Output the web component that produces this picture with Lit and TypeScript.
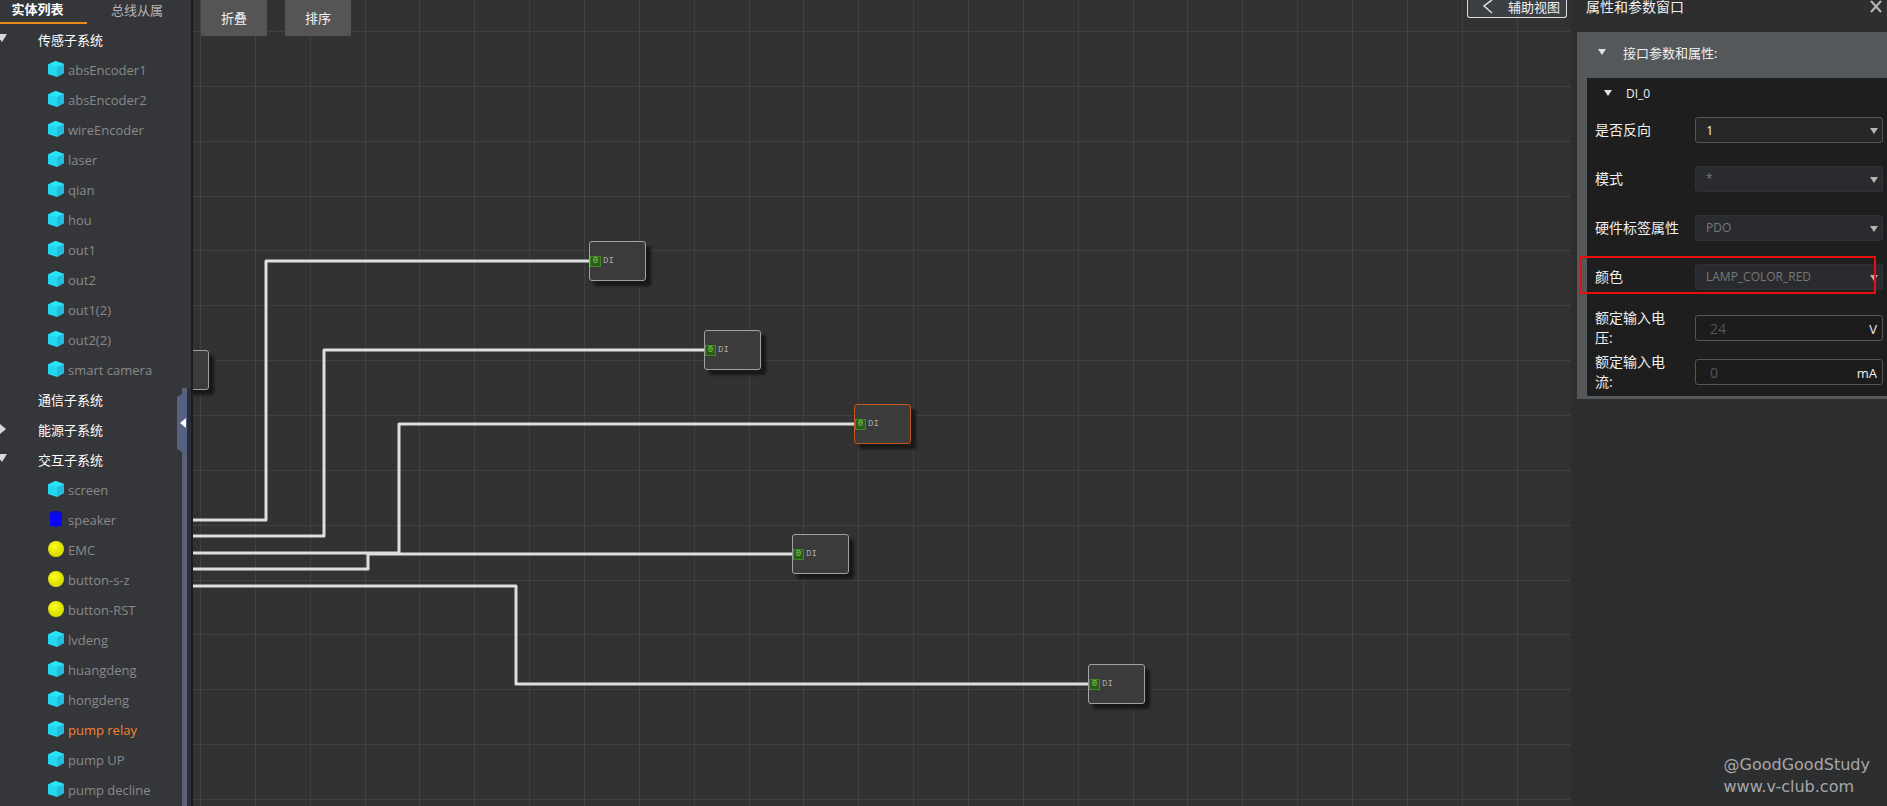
import { LitElement, html, css, svg } from "lit";
import { customElement } from "lit/decorators.js";
import { classMap } from "lit/directives/class-map.js";

type Icon = "cube" | "cylinder" | "ball";
interface Leaf { name: string; icon: Icon; active?: boolean }
interface Group { name: string; state: "open" | "closed" | "empty"; items: Leaf[] }

const cubes = (...names: string[]): Leaf[] => names.map((name) => ({ name, icon: "cube" as Icon }));

const GROUPS: Group[] = [
  {
    name: "传感子系统", state: "open",
    items: cubes("absEncoder1", "absEncoder2", "wireEncoder", "laser", "qian", "hou", "out1", "out2", "out1(2)", "out2(2)", "smart camera"),
  },
  { name: "通信子系统", state: "empty", items: [] },
  { name: "能源子系统", state: "closed", items: [] },
  {
    name: "交互子系统", state: "open",
    items: [
      ...cubes("screen"),
      { name: "speaker", icon: "cylinder" },
      { name: "EMC", icon: "ball" },
      { name: "button-s-z", icon: "ball" },
      { name: "button-RST", icon: "ball" },
      ...cubes("lvdeng", "huangdeng", "hongdeng"),
      { name: "pump relay", icon: "cube", active: true },
      ...cubes("pump UP", "pump decline"),
    ],
  },
];

const FONT = css`
  :host { font-family: "Open Sans", "Noto Sans CJK SC", sans-serif; }
  *, *::after { box-sizing: border-box; }
  button { font: inherit; color: inherit; background: none; border: 0; padding: 0; cursor: pointer; }
`;

@customElement("entity-tree")
class EntityTree extends LitElement {
  static styles = [FONT, css`
    :host { display: block; position: relative; background: #35363a; overflow: hidden; border-right: 2px solid #1c1c1d; font-size: 13px; color: #fff; }
    .tabs { display: grid; grid-template-columns: 87px 1fr; height: 24px; }
    .tab { height: 24px; line-height: 18px; padding-bottom: 4px; padding-right: 4px; color: #b4b4b5; }
    .tab.on { color: #fff; font-weight: 700; padding-right: 12px; border-bottom: 2px solid #f08a16; }
    ul { list-style: none; margin: 0; padding: 0; }
    .group, .leaf { display: flex; align-items: center; width: 100%; height: 30px; text-align: left; white-space: nowrap; }
    .group { padding-bottom: 2px; }
    .mark { width: 38px; height: 10px; flex: none; }
    .mark svg { display: block; }
    .leaf { padding-left: 48px; gap: 4px; color: #88898b; }
    .leaf svg { flex: none; margin-bottom: 3px; }
    .leaf.active { color: #f58231; }
    .tree { padding-top: 1px; }
    .rail { position: absolute; left: 182px; top: 388px; bottom: 0; width: 5px; background: #5d6177; }
    .edge { position: absolute; left: 187px; top: 388px; bottom: 0; width: 4px; background: #2b2e38; }
    .fold { position: absolute; left: 177px; top: 391px; width: 10px; height: 64px; background: #566080; clip-path: polygon(0 6px, 100% 0, 100% 100%, 0 58px); }
    .fold svg { display: block; margin: 0 0 0 3px; }
  `];

  private icon(kind: Icon) {
    if (kind === "ball") return html`<svg width="16" height="18" viewBox="0 0 16 18"><defs><radialGradient id="y" cx="40%" cy="35%"><stop offset="0" stop-color="#ffff1a"/><stop offset="1" stop-color="#dde000"/></radialGradient></defs><circle cx="8" cy="9" r="8" fill="url(#y)"/></svg>`;
    if (kind === "cylinder") return html`<svg width="16" height="18" viewBox="0 0 16 18"><path d="M2 2.500Q8 .5 14 2.500V15.500Q8 18 2 15.500Z" fill="#0a06f5"/><ellipse cx="8" cy="2.500" rx="6" ry="1.300" fill="#0b09c9"/></svg>`;
    return html`<svg width="16" height="18" viewBox="0 0 16 18"><path d="M7.500 1L16 4V13L9 17L0 14V4.500Z" fill="#23d8ee"/><path d="M7.500 1L16 4L9 7L0 4.500Z" fill="#2be4f8"/><path d="M9 7L16 4V13L9 17Z" fill="#25bddb"/></svg>`;
  }

  render() {
    return html`
      <div class="tabs" role="tablist">
        <button class="tab on" role="tab" aria-selected="true">实体列表</button>
        <button class="tab" role="tab" aria-selected="false">总线从属</button>
      </div>
      <ul class="tree">
        ${GROUPS.map((g) => html`<li>
          <button class="group">
            <span class="mark">${g.state === "open"
              ? html`<svg width="8" height="8"><path d="M-4 0H7L2 8Z" fill="#d8d8d8"/></svg>`
              : g.state === "closed"
              ? html`<svg width="8" height="10"><path d="M0 0L6 5L0 10Z" fill="#d8d8d8"/></svg>` : ""}</span>
            ${g.name}
          </button>
          <ul>${g.items.map((i) => html`<li>
            <button class=${classMap({ leaf: true, active: !!i.active })}>${this.icon(i.icon)}<span>${i.name}</span></button></li>`)}</ul>
        </li>`)}
      </ul>
      <div class="rail"></div><div class="edge"></div>
      <button class="fold" aria-label="收起"><svg width="6" height="10"><path d="M6 0V10L0 5Z" fill="#fff"/></svg></button>
    `;
  }
}

interface NodeBox { x: number; y: number; active?: boolean }
const NODES: NodeBox[] = [
  { x: 396, y: 241 }, { x: 511, y: 330 }, { x: 661, y: 404, active: true }, { x: 599, y: 534 }, { x: 895, y: 664 },
];
const WIRES = [
  "M0 520H73V261H397",
  "M0 536H131V350H512",
  "M0 553H206V424H662",
  "M0 569H175V554H600",
  "M0 586H323V684H896",
];
const STEP = 384 / 7;

@customElement("wire-canvas")
class WireCanvas extends LitElement {
  static styles = [FONT, css`
    :host { display: block; position: relative; overflow: hidden; background: #323232; color: #f2f2f2; }
    .wires { position: absolute; inset: 0; width: 100%; height: 100%; }
    .grid { stroke: #414141; stroke-width: 1; }
    .wire { stroke: #dedede; stroke-width: 3; fill: none; stroke-linejoin: round; }
    .node { position: absolute; display: flex; align-items: center; gap: 2px; width: 57px; height: 40px; border: 1px solid #a2a2a2; border-radius: 3px; background: #3b3b3b; box-shadow: 5px 5px 3px #181818; font: 9px/12px "Liberation Mono", monospace; color: #a8a8a8; }
    .node.active { border-color: #c1571c; }
    .port { width: 11px; height: 11px; background: #2c5c1c; border: 1px solid #3f8a26; color: #86cc58; line-height: 9px; text-align: center; }
    .bar { position: relative; display: flex; align-items: flex-start; gap: 18px; padding-left: 8px; padding-right: 4px; }
    .tool { width: 66px; height: 36px; background: #555; border-radius: 0 0 2px 2px; font-size: 13px; padding-bottom: 2px; }
    .view { display: flex; align-items: center; justify-content: space-between; margin-left: auto; width: 100px; height: 18px; padding: 0 6px 4px 15px; border: 1px solid #dcdcdc; border-top: 0; border-radius: 0 0 3px 3px; background: #3c3f43; font-size: 13px; line-height: 14px; }
  `];

  render() {
    const marks = (n: number) => Array.from({ length: n }, (_, i) => i);
    return html`
      <svg class="wires" aria-hidden="true">
        ${marks(26).map((i) => { const x = Math.round(7 + i * STEP) + 0.5; return svg`<line class="grid" x1=${x} x2=${x} y1="0" y2="100%"/>`; })}
        ${marks(15).map((i) => { const y = Math.round(31 + i * STEP) + 0.5; return svg`<line class="grid" x1="0" x2="100%" y1=${y} y2=${y}/>`; })}
        ${WIRES.map((d) => svg`<path class="wire" d=${d}/>`)}
      </svg>
      <div class="node" style="left:-41px;top:350px"></div>
      ${NODES.map((n) => html`<div class=${classMap({ node: true, active: !!n.active })} style="left:${n.x}px;top:${n.y}px"><span class="port">0</span>DI</div>`)}
      <div class="bar">
        <button class="tool">折叠</button><button class="tool">排序</button>
        <button class="view"><svg width="10" height="14"><path d="M9 0L1 6L9 13" fill="none" stroke="#e6e6e6" stroke-width="1.500"/></svg>辅助视图</button>
      </div>`;
  }
}

interface Field { id: string; label: string; value: string; kind: "select" | "number"; disabled?: boolean; unit?: string; marked?: boolean }
const SELECTS: Field[] = [
  { id: "invert", label: "是否反向", value: "1", kind: "select" },
  { id: "mode", label: "模式", value: "*", kind: "select", disabled: true },
  { id: "tag", label: "硬件标签属性", value: "PDO", kind: "select", disabled: true },
  { id: "color", label: "颜色", value: "LAMP_COLOR_RED", kind: "select", disabled: true, marked: true },
];
const NUMBERS: Field[] = [
  { id: "volt", label: "额定输入电压:", value: "24", kind: "number", unit: "V" },
  { id: "amp", label: "额定输入电流:", value: "0", kind: "number", unit: "mA" },
];

@customElement("property-panel")
class PropertyPanel extends LitElement {
  static styles = [FONT, css`
    :host { display: flex; flex-direction: column; background: #2d2e30; color: #f0f0f0; font-size: 13px; }
    header { display: flex; justify-content: space-between; height: 32px; padding: 0 5px 0 9px; font-size: 14px; line-height: 14px; }
    h2 { margin: 0; font: inherit; }
    .close { height: 14px; }
    .close svg { display: block; }
    .section { background: #55585b; padding: 0 0 3px 10px; }
    .title { display: flex; align-items: center; width: 100%; height: 46px; padding: 0 0 6px 11px; gap: 16px; }
    .body { background: #1e1e1e; padding-bottom: 2px; }
    .sub { display: flex; align-items: center; height: 30px; padding-left: 17px; gap: 13px; font-size: 12px; }
    .numbers { padding-top: 2px; }
    .row { position: relative; display: grid; grid-template-columns: 84px 1fr; align-items: center; column-gap: 16px; height: 49px; padding: 0 4px 5px 8px; }
    .row.number { height: 44px; padding-bottom: 0; }
    .row label { font-size: 14px; line-height: 20px; }
    .box { position: relative; display: block; }
    .box svg { position: absolute; right: 4px; top: 11px; pointer-events: none; }
    select, input { display: block; width: 100%; height: 26px; margin: 0; border: 1px solid #555; border-radius: 3px; background: #262626; color: #eee; padding: 0 10px; font: 13px/24px "Open Sans", sans-serif; appearance: none; opacity: 1; }
    select:disabled { background: #2a2b2e; border-color: #303134; color: #77787a; opacity: 1; }
    select:disabled { font-size: 12px; }
    input { background: #1c1c1c; color: #555; font-size: 14px; padding-left: 14px; }
    .unit { position: absolute; right: 6px; top: 4px; line-height: 20px; font-size: 13px; }
    .marked::after { content: ""; position: absolute; left: -7px; right: 11px; top: 1px; height: 38px; border: 2px solid #e60f0f; pointer-events: none; }
    footer { margin-top: auto; padding: 0 17px 8px; align-self: flex-end; font: 16px/22px "DejaVu Sans", sans-serif; color: #a7a7a8; }
    footer a { color: inherit; text-decoration: none; display: block; }
  `];

  private down = html`<svg width="9" height="7"><path d="M0 0H8L4 6Z" fill="#e2e2e2"/></svg>`;

  private field(f: Field) {
    return html`<div class=${classMap({ row: true, number: f.kind === "number", marked: !!f.marked })}>
      <label for=${f.id}>${f.label}</label>
      <span class="box">${f.kind === "select"
        ? html`<select id=${f.id} ?disabled=${!!f.disabled}><option>${f.value}</option></select><svg width="9" height="6"><path d="M0 0H8L4 6Z" fill="#b5b5b5"/></svg>`
        : html`<input id=${f.id} .value=${f.value}><span class="unit">${f.unit}</span>`}</span>
    </div>`;
  }

  render() {
    return html`
      <header><h2>属性和参数窗口</h2><button class="close" aria-label="关闭"><svg width="12" height="14"><path d="M1 1L11 12M11 1L1 12" stroke="#b8b8b8" stroke-width="2"/></svg></button></header>
      <section class="section">
        <button class="title">${this.down}<span>接口参数和属性:</span></button>
        <div class="body">
          <div class="sub">${this.down}<span>DI_0</span></div>
          ${SELECTS.map((f) => this.field(f))}
          <div class="numbers">${NUMBERS.map((f) => this.field(f))}</div>
        </div>
      </section>
      <footer>@GoodGoodStudy<a href="#">www.v-club.com</a></footer>`;
  }
}

@customElement("app-root")
class AppRoot extends LitElement {
  static styles = css`
    :host { display: grid; grid-template-columns: 193px minmax(0, 1fr) 310px; height: 100vh; overflow: hidden; background: #2d2e30; }
    wire-canvas { border-right: 6px solid #2e2e2f; }
  `;
  render() {
    return html`<entity-tree></entity-tree><wire-canvas></wire-canvas><property-panel></property-panel>`;
  }
}
